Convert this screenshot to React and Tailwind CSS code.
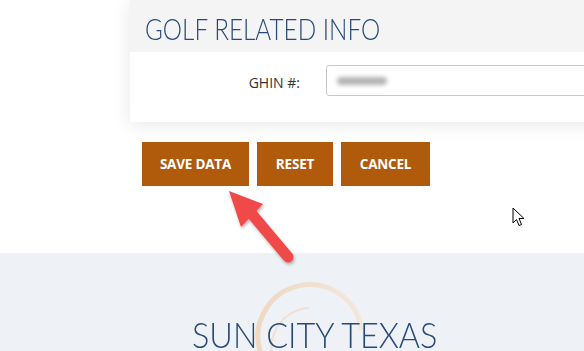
import React from 'react';

function Arrow() {
  return (
    <svg className="absolute left-[220px] top-[182px]" width="90" height="90" viewBox="0 0 90 90">
      <defs>
        <filter id="sh" x="-20%" y="-20%" width="140%" height="140%">
          <feDropShadow dx="1" dy="2" stdDeviation="1.5" floodColor="#000" floodOpacity="0.3" />
        </filter>
      </defs>
      <g filter="url(#sh)">
        <line x1="31" y1="31" x2="68" y2="75" stroke="#f04848" strokeWidth="11" strokeLinecap="round" />
        <polygon points="9,9 43,22 21,45" fill="#f04848" />
      </g>
    </svg>
  );
}

function Cursor() {
  return (
    <svg className="absolute left-[512px] top-[207px]" width="14" height="22" viewBox="0 0 14 22">
      <path d="M1 1 L1 16 L4.5 12.5 L7 18.5 L9.5 17.5 L7 11.5 L12 11.5 Z" fill="#fff" stroke="#000" strokeWidth="1" strokeLinejoin="round" />
    </svg>
  );
}

function Swoosh() {
  return (
    <svg className="absolute left-[250px] top-[27px] opacity-75" width="120" height="120" viewBox="0 0 120 120">
      <defs>
        <linearGradient id="sw" x1="0" y1="0" x2="1" y2="0">
          <stop offset="0" stopColor="#efcfb2" />
          <stop offset="1" stopColor="#f4e4d6" />
        </linearGradient>
      </defs>
      <path d="M9.8 70.5 A52 52 0 1 1 111.2 48" fill="none" stroke="url(#sw)" strokeWidth="5" strokeLinecap="round" />
      <path d="M24 82 A40 40 0 0 1 58 28" fill="none" stroke="#f1d9c6" strokeWidth="2" strokeLinecap="round" />
    </svg>
  );
}

const btn = 'h-[44px] bg-[#b05a0c] text-white text-[13.5px] font-bold tracking-[-0.2px]';

export default function App() {
  return (
    <div className="relative w-[584px] h-[351px] overflow-hidden bg-white" style={{ fontFamily: 'Lato, "Open Sans", sans-serif' }}>
      <div className="h-[253px] flex flex-col">
        <div className="ml-[130px] w-[500px] shadow-[0_2px_18px_rgba(0,0,0,0.10)] bg-white">
          <div className="h-[52px] bg-[#f4f4f4] pl-[15px] flex items-center">
            <h2 className="text-[30px] font-light text-[#284a78] leading-none pt-[4px] whitespace-nowrap origin-left scale-x-[0.81]">GOLF RELATED INFO</h2>
          </div>
          <div className="h-[70px] flex items-start pt-[13px]">
            <label className="w-[170px] text-right text-[14px] text-[#333] pt-[7px]" style={{ fontFamily: '"Open Sans", sans-serif' }}>GHIN #:</label>
            <div className="ml-[26px] flex-1 h-[31px] border border-[#c8c8c8] rounded-[3px] flex items-center pl-[10px]">
              <div className="w-[50px] h-[8px] rounded-full bg-[#b4b4b4] blur-[2px]"></div>
            </div>
          </div>
        </div>
        <div className="ml-[142px] mt-[20px] flex gap-[8px]" style={{ fontFamily: '"Open Sans", sans-serif' }}>
          <button className={`${btn} w-[107px]`}>SAVE DATA</button>
          <button className={`${btn} w-[76px]`}>RESET</button>
          <button className={`${btn} w-[89px]`}>CANCEL</button>
        </div>
      </div>
      <div className="h-[98px] bg-[#eef2f6] relative flex flex-col pt-[63px] pl-[192px]">
        <Swoosh />
        <h1 className="relative text-[36px] font-light text-[#284a78] leading-none whitespace-nowrap origin-left scale-x-[0.9]">SUN CITY TEXAS</h1>
      </div>
      <Arrow />
      <Cursor />
    </div>
  );
}
